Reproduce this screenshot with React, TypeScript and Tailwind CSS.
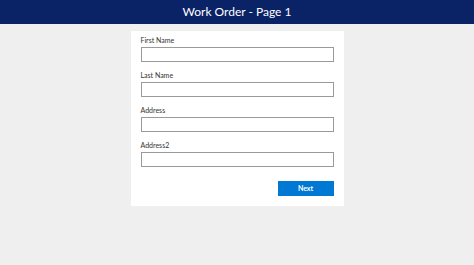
export default function App() {
  const fields = ['First Name', 'Last Name', 'Address', 'Address2']

  return (
    <div className="min-h-[265px] bg-[#efefef] font-['Lato',sans-serif]">
      <header className="h-6 bg-[#0a2266] flex items-center justify-center">
        <h1 className="text-[12px] leading-none text-white">Work Order - Page 1</h1>
      </header>

      <main className="pt-[7px]">
        <div className="w-[213px] mx-auto bg-white px-[10px] pt-[5px] pb-[10px]">
          {fields.map((label) => (
            <div key={label} className="mb-[9px]">
              <label className="block text-[7px] leading-[8px] text-[#333] mb-[3px]">{label}</label>
              <input
                type="text"
                className="block w-full h-[15px] border border-[#9a9a9a] bg-white outline-none"
              />
            </div>
          ))}
          <div className="flex justify-end pt-[5px]">
            <button className="w-[56px] h-[15px] bg-[#0078d4] text-white text-[7px] font-bold leading-none">
              Next
            </button>
          </div>
        </div>
      </main>
    </div>
  )
}
